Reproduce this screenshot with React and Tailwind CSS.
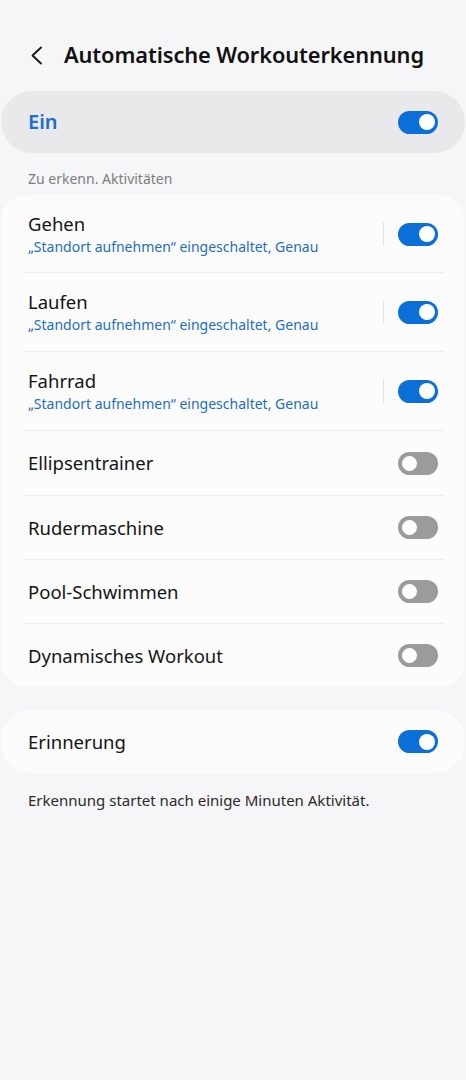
import React from "react";

const font = { fontFamily: '"Noto Sans", "Open Sans", Roboto, sans-serif' };

function Toggle({ on }) {
  return on ? (
    <div className="relative w-[40px] h-[23px] rounded-full bg-[#0b6fd8] shrink-0">
      <div className="absolute right-[3px] top-[3.5px] w-[16px] h-[16px] rounded-full bg-white" />
    </div>
  ) : (
    <div className="relative w-[40px] h-[23px] rounded-full bg-[#9b9b9e] shrink-0">
      <div className="absolute left-[2px] top-[2px] w-[19px] h-[19px] rounded-full bg-white border-[2px] border-[#9b9b9e]" />
    </div>
  );
}

const rows = [
  { t: "Gehen", s: true, on: true },
  { t: "Laufen", s: true, on: true },
  { t: "Fahrrad", s: true, on: true },
  { t: "Ellipsentrainer", on: false },
  { t: "Rudermaschine", on: false },
  { t: "Pool-Schwimmen", on: false },
  { t: "Dynamisches Workout", on: false },
];

export default function App() {
  return (
    <div className="w-[466px] min-h-[1080px] bg-[#f6f6f8] pt-[37px]" style={font}>
      <div className="flex items-center h-[36px]">
        <div className="w-[64px] flex justify-start pl-[28px]">
          <svg width="15" height="19" viewBox="0 0 15 19" fill="none">
            <path d="M13 1.5 L4.5 9.5 L13 17.5" stroke="#1a1a1a" strokeWidth="1.9" strokeLinecap="round" strokeLinejoin="round" />
          </svg>
        </div>
        <div className="text-[21.8px] font-semibold text-[#111] tracking-[-0.1px]">Automatische Workouterkennung</div>
      </div>

      <div className="mt-[18px] mx-[1px] h-[62px] rounded-[31px] bg-[#e9e9eb] flex items-center justify-between pl-[27px] pr-[27px]">
        <span className="text-[20px] font-semibold text-[#1a6fcf]">Ein</span>
        <Toggle on />
      </div>

      <div className="mt-[16px] pl-[28px] h-[20px] leading-[20px] text-[14px] text-[#7d7d80]">Zu erkenn. Aktivitäten</div>

      <div className="mt-[6px] mx-[1px] rounded-[26px] bg-[#fcfcfd] px-[22px]">
        {rows.map((r, i) => (
          <div key={r.t} className={i > 0 ? "border-t border-[#ebebed]" : ""}>
            <div className={`flex items-center justify-between pl-[5px] pr-[5px] ${r.s ? (i === 0 ? "h-[77px] pt-[1px]" : "h-[78px]") : i === 3 ? "h-[64px]" : "h-[63px]"}`}>
              <div className="flex flex-col">
                <span className="text-[18.5px] leading-[24px] text-[#141414]">{r.t}</span>
                {r.s && (
                  <span className="text-[14px] leading-[20px] mt-[1px] text-[#1e6ebf]">„Standort aufnehmen“ eingeschaltet, Genau</span>
                )}
              </div>
              <div className="flex items-center">
                {r.s && <div className="w-px h-[24px] bg-[#e4e4e6] mr-[14px]" />}
                <Toggle on={r.on} />
              </div>
            </div>
          </div>
        ))}
      </div>

      <div className="mt-[23px] mx-[1px] h-[63px] rounded-[31px] bg-[#fcfcfd] flex items-center justify-between pl-[27px] pr-[27px]">
        <span className="text-[18.5px] text-[#141414]">Erinnerung</span>
        <Toggle on />
      </div>

      <div className="mt-[17px] pl-[28px] text-[15px] leading-[20px] text-[#2a2a2a]">Erkennung startet nach einige Minuten Aktivität.</div>
    </div>
  );
}
